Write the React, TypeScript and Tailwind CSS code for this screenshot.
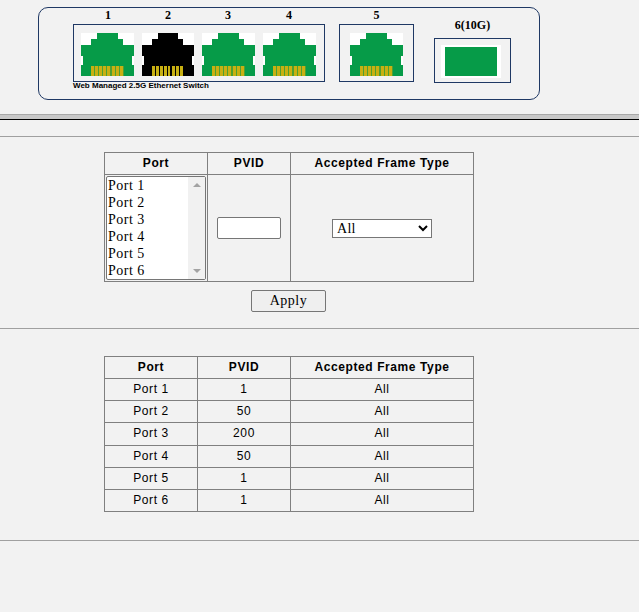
const GREEN = '#069b48';

function RjIcon({ color = GREEN, width = 53 }: { color?: string; width?: number }) {
  const pins = [10, 14, 18, 22, 26, 31, 35, 39];
  const gap = color === GREEN ? '#4f9f30' : '#000000';
  return (
    <svg width={width} height="43" viewBox="0 0 53 43" preserveAspectRatio="none" className="block" shapeRendering="crispEdges">
      <rect width="53" height="43" fill="#fff" />
      <path d="M16 0H37V6H42V12H53V23H51V32H53V43H0V32H2V23H0V12H10V6H16Z" fill={color} />
      <rect x="10" y="33" width="33" height="10" fill={gap} />
      {pins.map((x) => (
        <rect key={x} x={x} y="33" width="3" height="10" fill="#c8b012" />
      ))}
    </svg>
  );
}

const listPorts = ['Port 1', 'Port 2', 'Port 3', 'Port 4', 'Port 5', 'Port 6'];
const rows = [
  ['Port 1', '1', 'All', 'h-[22px]'],
  ['Port 2', '50', 'All', 'h-[22px]'],
  ['Port 3', '200', 'All', 'h-[23px]'],
  ['Port 4', '50', 'All', 'h-[22px]'],
  ['Port 5', '1', 'All', 'h-[22px]'],
  ['Port 6', '1', 'All', 'h-[22px]'],
];

const serif = "font-['Liberation_Serif','Times_New_Roman',serif]";
const sans = "font-['Liberation_Sans',Arial,sans-serif]";
const th = `border border-[#808080] p-0 pb-[2px] text-center align-middle text-xs font-bold tracking-[0.6px] text-black ${sans}`;
const td = `border border-[#808080] p-0 pb-[2px] text-center align-middle text-xs tracking-[0.6px] text-black ${sans}`;

export default function App() {
  return (
    <div className="min-h-[612px] w-full overflow-hidden bg-[#f2f2f2]">
      {/* switch panel */}
      <div className="pl-[38px] pt-[7px]">
        <div className="flex h-[93px] w-[502px] items-start rounded-[10px] border border-[#1f3864] pl-[34px] pt-[2px]">
          <div className="w-[252px]">
            <div className={`flex h-[14px] pl-[5px] text-xs font-bold leading-[11px] text-black ${serif}`}>
              <span className="w-[60px] text-center">1</span>
              <span className="w-[60px] text-center">2</span>
              <span className="w-[60px] text-center">3</span>
              <span className="w-[62px] text-center">4</span>
            </div>
            <div className="flex h-[58px] gap-2 border border-[#1f3864] pl-[7px] pt-2">
              <RjIcon />
              <RjIcon color="#000000" width={52} />
              <RjIcon />
              <RjIcon />
            </div>
            <div className={`whitespace-nowrap text-[8px] font-bold leading-[7px] text-black ${sans}`}>
              Web Managed 2.5G Ethernet Switch
            </div>
          </div>
          <div className="ml-[14px] w-[75px]">
            <div className={`h-[14px] text-center text-xs font-bold leading-[11px] text-black ${serif}`}>5</div>
            <div className="h-[58px] border border-[#1f3864] pl-[10px] pt-2">
              <RjIcon />
            </div>
          </div>
          <div className="ml-5 w-[77px]">
            <div className={`h-7 text-center text-xs font-bold leading-[30px] text-black ${serif}`}>6(10G)</div>
            <div className="h-[45px] border border-[#1f3864] pl-[6px] pt-[6px]">
              <div className="flex h-[33px] w-[60px] items-center justify-center bg-white">
                <div className="h-[29px] w-[52px] bg-[#069b48]" />
              </div>
            </div>
          </div>
        </div>
      </div>

      <div className="mt-[14px] h-[6px] border-b border-t border-b-black border-t-[#a8a8a8] bg-[#c8c8c8]" />
      <div className="mt-4 h-px bg-[#a0a0a0]" />

      {/* edit form */}
      <div className="pl-[104px] pt-[15px]">
        <table className="w-[370px] table-fixed border-collapse">
          <colgroup>
            <col className="w-[103px]" />
            <col className="w-[83px]" />
            <col />
          </colgroup>
          <tbody>
            <tr className="h-[22px]">
              <th className={th}>Port</th>
              <th className={th}>PVID</th>
              <th className={th}>Accepted Frame Type</th>
            </tr>
            <tr className="h-[107px]">
              <td className="border border-[#808080] p-0 align-middle">
                <div className="mx-auto flex h-[104px] w-[100px] rounded-[2px] border border-[#767676] bg-white">
                  <div className={`flex-1 text-sm leading-[17px] tracking-[0.5px] text-black ${serif}`}>
                    {listPorts.map((p) => (
                      <div key={p} className="pl-[1px]">{p}</div>
                    ))}
                  </div>
                  <div className="flex w-[17px] flex-col items-center justify-between bg-[#f1f1f1] py-[6px]">
                    <div className="h-0 w-0 border-x-[4px] border-b-[4px] border-x-transparent border-b-[#a3a3a3]" />
                    <div className="h-0 w-0 border-x-[4px] border-t-[4px] border-x-transparent border-t-[#a3a3a3]" />
                  </div>
                </div>
              </td>
              <td className="border border-[#808080] p-0 text-center align-middle">
                <input
                  type="text"
                  className="mx-auto block h-[22px] w-16 rounded-[2px] border border-[#767676] bg-white"
                />
              </td>
              <td className="border border-[#808080] p-0 text-center align-middle">
                <select
                  defaultValue="All"
                  className={`mx-auto block h-[19px] w-[100px] border border-[#767676] bg-white text-sm leading-none tracking-[0.3px] text-black ${serif}`}
                >
                  <option>All</option>
                </select>
              </td>
            </tr>
          </tbody>
        </table>
        <div className="flex w-[369px] justify-center pt-2">
          <button
            type="button"
            className={`h-[22px] w-[75px] rounded-[2px] border border-[#767676] bg-[#efefef] text-sm leading-none tracking-[0.5px] text-black ${serif}`}
          >
            Apply
          </button>
        </div>
      </div>

      <div className="mt-4 h-px bg-[#a0a0a0]" />

      {/* current settings */}
      <div className="pl-[104px] pt-[27px]">
        <table className="w-[370px] table-fixed border-collapse">
          <colgroup>
            <col className="w-[93px]" />
            <col className="w-[93px]" />
            <col />
          </colgroup>
          <tbody>
            <tr className="h-[22px]">
              <th className={th}>Port</th>
              <th className={th}>PVID</th>
              <th className={th}>Accepted Frame Type</th>
            </tr>
            {rows.map((r) => (
              <tr key={r[0]} className={r[3]}>
                <td className={td}>{r[0]}</td>
                <td className={td}>{r[1]}</td>
                <td className={td}>{r[2]}</td>
              </tr>
            ))}
          </tbody>
        </table>
      </div>

      <div className="mt-7 h-px bg-[#a0a0a0]" />
    </div>
  );
}
